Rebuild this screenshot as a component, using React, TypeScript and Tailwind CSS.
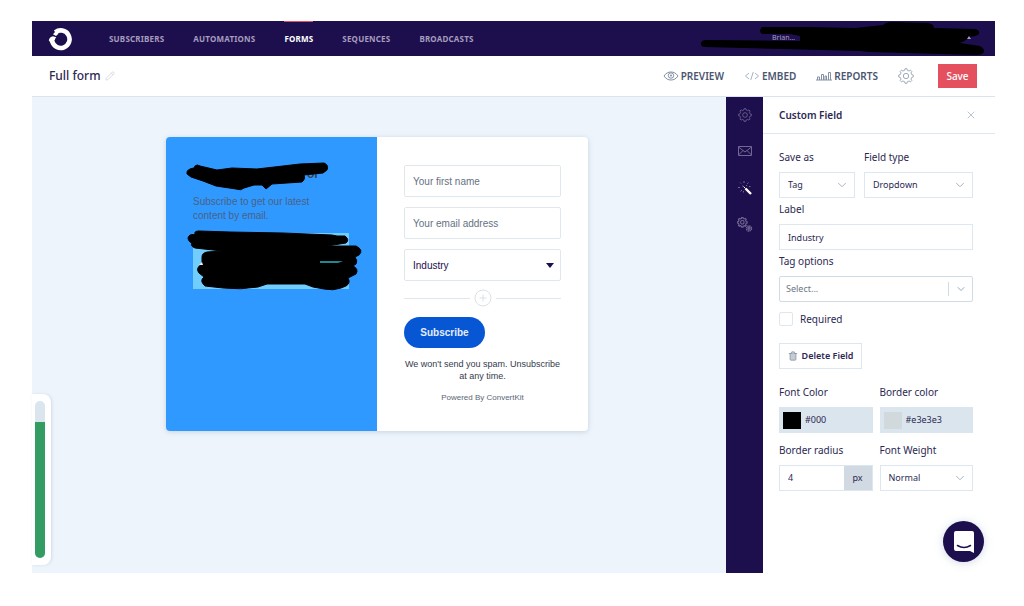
import type { ReactNode } from "react";
import { ChevronDown, Pencil, Trash2, X } from "lucide-react";

const NAV = ["Subscribers", "Automations", "Forms", "Sequences", "Broadcasts"];

function Logo() {
  return (
    <svg viewBox="0 0 24 24" className="size-6" fill="none" stroke="#fff">
      <path d="M7.300 5.300A8.800 8.800 0 1 1 4.200 14.300" strokeWidth="4.600" />
      <path d="M.8 13.200Q1.600 9.800 5 9.300L8.200 10.200Q7 11.500 6.600 13.600L2.500 15.800Z" fill="#fff" stroke="none" />
      <path d="M5 7.200L8.600 3.200 10.500 6.800 8 9Z" fill="#fff" stroke="none" />
    </svg>
  );
}

function gearPath(teeth: number, outer: number, inner: number) {
  const points: string[] = [];
  const step = (Math.PI * 2) / teeth;
  for (let i = 0; i < teeth; i++) {
    const a = i * step - Math.PI / 2;
    for (const [offset, r] of [[-0.3, inner], [-0.17, outer], [0.17, outer], [0.3, inner]]) {
      const angle = a + offset * step;
      points.push(`${(12 + Math.cos(angle) * r).toFixed(2)} ${(12 + Math.sin(angle) * r).toFixed(2)}`);
    }
  }
  return `M${points.join("L")}Z`;
}

const GEAR = gearPath(8, 11, 8.8);

function GearIcon({ className }: { className?: string }) {
  return (
    <svg viewBox="0 0 24 24" className={className} fill="none" stroke="currentColor" strokeWidth="1.4" strokeLinejoin="round">
      <path d={GEAR} />
      <circle cx="12" cy="12" r="4" />
    </svg>
  );
}

function EyeIcon() {
  return (
    <svg viewBox="0 0 16 10" className="h-2.5 w-4" fill="none" stroke="currentColor">
      <path d="M1 5C3 2 5.400 1 8 1s5 1 7 4c-2 3-4.400 4-7 4S3 8 1 5Z" strokeWidth="1" />
      <circle cx="8" cy="4.500" r="2.700" strokeWidth="1" />
      <circle cx="8" cy="4.500" r="1" fill="currentColor" stroke="none" />
    </svg>
  );
}

function CodeIcon() {
  return (
    <svg viewBox="0 0 16 10" className="h-2.5 w-4" fill="none" stroke="currentColor">
      <path d="M5 2L1.500 5 5 8M11 2l3.500 3L11 8M9.300 1L6.700 9" />
    </svg>
  );
}

function ChartIcon() {
  return (
    <svg viewBox="0 0 16 10" className="h-2.5 w-4" fill="none" stroke="currentColor">
      <path d="M1.500 9V6h2v3M5.500 9V3.500h2V9M9 9V5h1.500v4M12.500 9V1.500h2V9M0 9h16" />
    </svg>
  );
}

function MailIcon() {
  return (
    <svg viewBox="0 0 16 12" className="h-3 w-4" fill="none" stroke="currentColor" strokeWidth="1">
      <path d="M1.500 1.500h13v9h-13zM1.500 2l6.500 5 6.500-5M1.500 10l4.500-4.500M14.500 10L10 5.500" />
    </svg>
  );
}

function WandIcon() {
  return (
    <svg viewBox="0 0 16 16" className="size-4" fill="none" stroke="currentColor">
      <path d="M8.500 8.500l5.500 5.500" stroke="#fff" strokeWidth="2.400" />
      <path d="M6.500 6.500l2 2" stroke="#fff" strokeWidth="1" />
      <path d="M7 1v2M3 2.500l1 1M11.500 2.500l-1.300 1.300M1 7.500h2M3.500 11.500L5 10M6.500 11v1.500M12 6.500h1.500M5 6h.8M9 5.500h1" />
    </svg>
  );
}

function GearsIcon() {
  return (
    <svg viewBox="0 0 36 36" className="size-4" fill="none" stroke="currentColor" strokeWidth="2.500">
      <path d={GEAR} />
      <circle cx="12" cy="12" r="4" />
      <circle cx="27" cy="26" r="5.500" strokeWidth="3.500" strokeDasharray="3 1.300" />
      <circle cx="27" cy="26" r="2" />
    </svg>
  );
}

function Field({ label, htmlFor, children }: { label: string; htmlFor: string; children: ReactNode }) {
  return (
    <div className="min-w-0">
      <label htmlFor={htmlFor} className="mb-1.5 block text-[10px] leading-[18px]">
        {label}
      </label>
      {children}
    </div>
  );
}

function Select({ id, value }: { id: string; value: string }) {
  return (
    <div className="relative">
      <select id={id} className="block h-[26px] w-full appearance-none border border-[#dde7ef] bg-white px-2 text-[9px]">
        <option>{value}</option>
      </select>
      <ChevronDown className="pointer-events-none absolute top-1.5 right-1.5 size-3.5 text-[#9aa9b8]" strokeWidth={1.5} />
    </div>
  );
}

function ColorField({ id, label, value, swatch }: { id: string; label: string; value: string; swatch: string }) {
  return (
    <Field label={label} htmlFor={id}>
      <div className="flex h-[26px] items-center gap-1 bg-[#dbe5ee] px-1">
        <span className={`h-[17px] w-[18px] shrink-0 ${swatch}`} />
        <input id={id} defaultValue={value} className="w-full min-w-0 bg-transparent text-[9px] outline-none" />
      </div>
    </Field>
  );
}

function TopNav() {
  return (
    <header className="flex h-[35px] items-center bg-[#1d0f4e] pl-4">
      <Logo />
      <nav className="ml-[37px] flex h-full items-center gap-[29px]">
        {NAV.map((item) => (
          <a
            key={item}
            href="#"
            className={
              item === "Forms"
                ? "flex h-full items-center border-y border-t-[#e5505f] border-b-transparent text-[8px] font-bold tracking-wide text-white uppercase"
                : "flex h-full items-center text-[8px] font-bold tracking-wide text-[#a59dbd] uppercase"
            }
          >
            {item}
          </a>
        ))}
      </nav>
      <div className="relative mr-2 ml-auto flex h-full w-[287px] items-center">
        <span className="ml-[72px] text-[7px] text-[#a59dbd]">Brian…</span>
        <svg viewBox="0 0 287 35" className="absolute inset-0 h-full w-full">
          <path d="M62 6L110 6 155 7 183 4Q186 1 192 1L228 2Q234 3 234 7L275 8Q280 9 279 13 277 15 270 16 265 20 260 22L280 25Q285 28 284 31 282 34 276 34L170 31 160 30 4 26Q0 25 1 22 2 19 6 19L100 20 100 15 90 13 62 13Q58 10 62 6Z" />
          <path d="M267 18l2-3 2 3z" fill="#a59dbd" />
        </svg>
      </div>
    </header>
  );
}

function Toolbar() {
  return (
    <div className="flex h-[41px] items-center border-b border-[#d9e4ee] bg-white pr-[18px] pl-[17px]">
      <h1 className="text-xs font-medium">Full form</h1>
      <button aria-label="Rename form" className="ml-1 text-[#c3ced9]">
        <Pencil className="size-2.5" strokeWidth={1.5} />
      </button>
      <div className="ml-auto flex items-center text-[10px] font-semibold text-[#4a5570]">
        <a href="#" className="flex items-center gap-0.5">
          <span className="text-[#8391a3]"><EyeIcon /></span>PREVIEW
        </a>
        <a href="#" className="ml-5 flex items-center gap-0.5">
          <span className="text-[#a7b3c0]"><CodeIcon /></span>EMBED
        </a>
        <a href="#" className="ml-5 flex items-center gap-0.5">
          <span className="text-[#8391a3]"><ChartIcon /></span>REPORTS
        </a>
        <button aria-label="Settings" className="ml-5 text-[#98a5b3]">
          <GearIcon className="size-4" />
        </button>
        <button className="ml-6 h-6 w-[39px] bg-[#e5505f] text-[10px] font-medium text-white">Save</button>
      </div>
    </div>
  );
}

function FormPreview() {
  const input =
    "h-8 w-full rounded-xs border border-[#dfe8ef] bg-white px-2 text-[10px] placeholder:text-[#66717f]";
  return (
    <div className="grid w-[422px] grid-cols-2 overflow-hidden rounded-sm bg-white font-['Liberation_Sans',sans-serif] shadow-[0_1px_5px_rgba(120,150,180,0.35)]">
      <section className="relative bg-[#2f99ff] px-[27px] pt-7 text-[10px] text-[#4b6285]">
        <h2 className="mb-3 pl-[114px] text-xs leading-[18px] font-bold text-[#31435f]">or</h2>
        <p className="pr-3 leading-[14px]">Subscribe to get our latest content by email.</p>
        <div className="mt-2.5 h-14 w-[156px] bg-[#72cdff]" />
        <svg viewBox="0 0 211 170" className="absolute top-0 left-0 h-[170px] w-[211px]" strokeLinejoin="round">
          <path d="M21 37Q20 32 28 31L29 29Q31 27 34 29L51 33 66 31 91 32 117 29 134 27 158 26Q163 28 161 33L157 36 138 38Q140 42 136 45L106 47 100 52 96 48 88 48 78 51Q75 54 70 52L50 49 37 44 25 40Z" stroke="#000" strokeWidth="1" />
          <path d="M24 105Q20 101 24 98L29 97Q28 94 33 94L64 95 117 96 166 98 171 99 179 99Q184 103 180 106L161 109 190 109Q198 113 193 118L189 120Q192 124 190 127L187 129Q193 132 190 137L182 141Q185 146 180 149L175 151Q167 154 158 152L147 150 139 147 101 147 92 150Q74 153 57 151L39 149Q33 144 38 140L33 136Q29 131 36 127L36 120Q36 116 41 115L56 114 29 111Q24 109 26 106Z" stroke="#000" strokeWidth="1" />
          <path d="M154 124h23l-5 2h-18z" fill="#218890" />
          <path d="M33 128l3-3 1 3z" fill="#eee" />
        </svg>
      </section>
      <section className="flex flex-col px-[27px] pt-7 pb-[27px] text-center">
        <div className="flex flex-col gap-2.5">
          <input aria-label="First name" placeholder="Your first name" className={input} />
          <input aria-label="Email address" placeholder="Your email address" className={input} />
          <div className="relative">
            <select aria-label="Industry" className="block h-8 w-full appearance-none rounded-xs border border-[#dfe8ef] bg-white px-2 text-[10px] text-[#1d0f4e]">
              <option>Industry</option>
            </select>
            <svg viewBox="0 0 8 5" className="pointer-events-none absolute top-3.5 right-[7px] h-[5px] w-2" fill="#1d0f4e">
              <path d="M0 0h8L4 5z" />
            </svg>
          </div>
        </div>
        <div className="mt-2 flex items-center gap-1">
          <span className="h-px flex-1 bg-[#dfe8ef]" />
          <button aria-label="Add field" className="text-[#d9e2e9]">
            <svg viewBox="0 0 18 18" className="size-[18px]" fill="none" stroke="currentColor">
              <circle cx="9" cy="9" r="8" />
              <path d="M9 5.500v7M5.500 9h7" />
            </svg>
          </button>
          <span className="h-px flex-1 bg-[#dfe8ef]" />
        </div>
        <button className="mt-2.5 h-[31px] w-[81px] rounded-full bg-[#0757d5] text-[10px] font-bold text-[#e4eefb]">Subscribe</button>
        <p className="-mx-1 mt-2.5 text-[9px] leading-3 text-[#333b4d]">We won't send you spam. Unsubscribe at any time.</p>
        <a href="#" className="mt-2.5 text-[8px] leading-3 text-[#5c6675]">Powered By ConvertKit</a>
      </section>
    </div>
  );
}

function Rail() {
  return (
    <aside className="flex w-[37px] shrink-0 flex-col items-center gap-[21px] bg-[#1d0f4e] pt-[11px] text-[#716792]">
      <button aria-label="Settings"><GearIcon className="size-3.5" /></button>
      <button aria-label="Email" className="flex h-4 items-center"><MailIcon /></button>
      <button aria-label="Styles"><WandIcon /></button>
      <button aria-label="Advanced"><GearsIcon /></button>
    </aside>
  );
}

function FieldPanel() {
  return (
    <aside className="w-[232px] shrink-0 bg-white">
      <div className="flex h-[37px] items-center justify-between border-b border-[#dde7ef] pr-[18px] pl-4">
        <h2 className="text-[10px] font-semibold">Custom Field</h2>
        <button aria-label="Close" className="text-[#a3b0bd]">
          <X className="size-3" strokeWidth={1.5} />
        </button>
      </div>
      <div className="pt-3.5 pr-[22px] pb-4 pl-4">
        <div className="grid gap-0.5">
          <div className="grid grid-cols-[76px_1fr] gap-[9px]">
            <Field label="Save as" htmlFor="save-as"><Select id="save-as" value="Tag" /></Field>
            <Field label="Field type" htmlFor="field-type"><Select id="field-type" value="Dropdown" /></Field>
          </div>
          <Field label="Label" htmlFor="label">
            <input id="label" defaultValue="Industry" className="block h-[26px] w-full border border-[#dde7ef] px-2 text-[9px]" />
          </Field>
          <Field label="Tag options" htmlFor="tag-options">
            <div className="relative">
              <select id="tag-options" className="block h-[26px] w-full appearance-none rounded-xs border border-[#cfdbe5] bg-white px-1.5 text-[9px] text-[#6d7788]">
                <option>Select...</option>
              </select>
              <div className="pointer-events-none absolute inset-y-1.5 right-1.5 flex items-center gap-1.5 border-l border-[#cfdbe5] pl-1.5 text-[#9aa9b8]">
                <ChevronDown className="size-3" strokeWidth={2} />
              </div>
            </div>
          </Field>
        </div>
        <label className="mt-2.5 flex h-3.5 items-center gap-[7px] text-[10px]">
          <input type="checkbox" className="size-3.5 appearance-none rounded-xs border border-[#dde7ef] bg-white" />
          Required
        </label>
        <button className="mt-[17px] flex h-[26px] w-[83px] items-center justify-center gap-1 border border-[#dde7ef] text-[9px] font-semibold">
          <Trash2 className="size-2.5 fill-[#c5ccd4] text-[#8b97a5]" strokeWidth={2} />
          Delete Field
        </button>
        <div className="mt-3.5 grid grid-cols-2 gap-x-[7px] gap-y-2">
          <ColorField id="font-color" label="Font Color" value="#000" swatch="bg-black" />
          <ColorField id="border-color" label="Border color" value="#e3e3e3" swatch="bg-[#d1d9dd]" />
          <Field label="Border radius" htmlFor="border-radius">
            <div className="flex h-[26px] border border-[#dde7ef]">
              <input id="border-radius" defaultValue="4" className="w-full min-w-0 px-2 text-[9px]" />
              <span className="flex w-7 shrink-0 items-center justify-center bg-[#d1dae2] text-[9px]">px</span>
            </div>
          </Field>
          <Field label="Font Weight" htmlFor="font-weight"><Select id="font-weight" value="Normal" /></Field>
        </div>
      </div>
    </aside>
  );
}

export default function App() {
  return (
    <div className="flex min-h-screen flex-col bg-white pt-[21px] pr-[29px] pb-[33px] pl-8 font-['Noto_Sans',sans-serif] text-[#2b2852]">
      <TopNav />
      <Toolbar />
      <div className="relative flex flex-1">
        <main className="flex flex-1 items-start justify-center bg-[#eef4fb] pt-10 pr-1">
          <FormPreview />
        </main>
        <Rail />
        <FieldPanel />

        {/* Progress widget */}
        <div className="absolute bottom-2 left-0 h-[171px] w-[19px] rounded-r-lg bg-white py-[7px] pl-[3px] shadow-[1px_0_3px_rgba(120,150,180,0.25)]">
          <div className="flex h-full w-2.5 flex-col overflow-hidden rounded-full bg-[#dbe5ee] pt-[21px]">
            <div className="flex-1 bg-[#329c63]" />
          </div>
        </div>

        {/* Chat launcher */}
        <button
          aria-label="Open chat"
          className="absolute right-[11px] bottom-[11px] flex size-[41px] items-center justify-center rounded-full bg-[#1d0f4e] shadow-[0_1px_8px_rgba(120,150,180,0.35)]"
        >
          <svg viewBox="0 0 20 22" className="h-[22px] w-5" fill="none">
            <path d="M2 0h16q2 0 2 2v20l-4-2H2q-2 0-2-2V2q0-2 2-2z" fill="#fff" />
            <path d="M3.500 14.500q6.500 4 13 0" stroke="#1d0f4e" strokeWidth="1.500" strokeLinecap="round" />
          </svg>
        </button>
      </div>
    </div>
  );
}
